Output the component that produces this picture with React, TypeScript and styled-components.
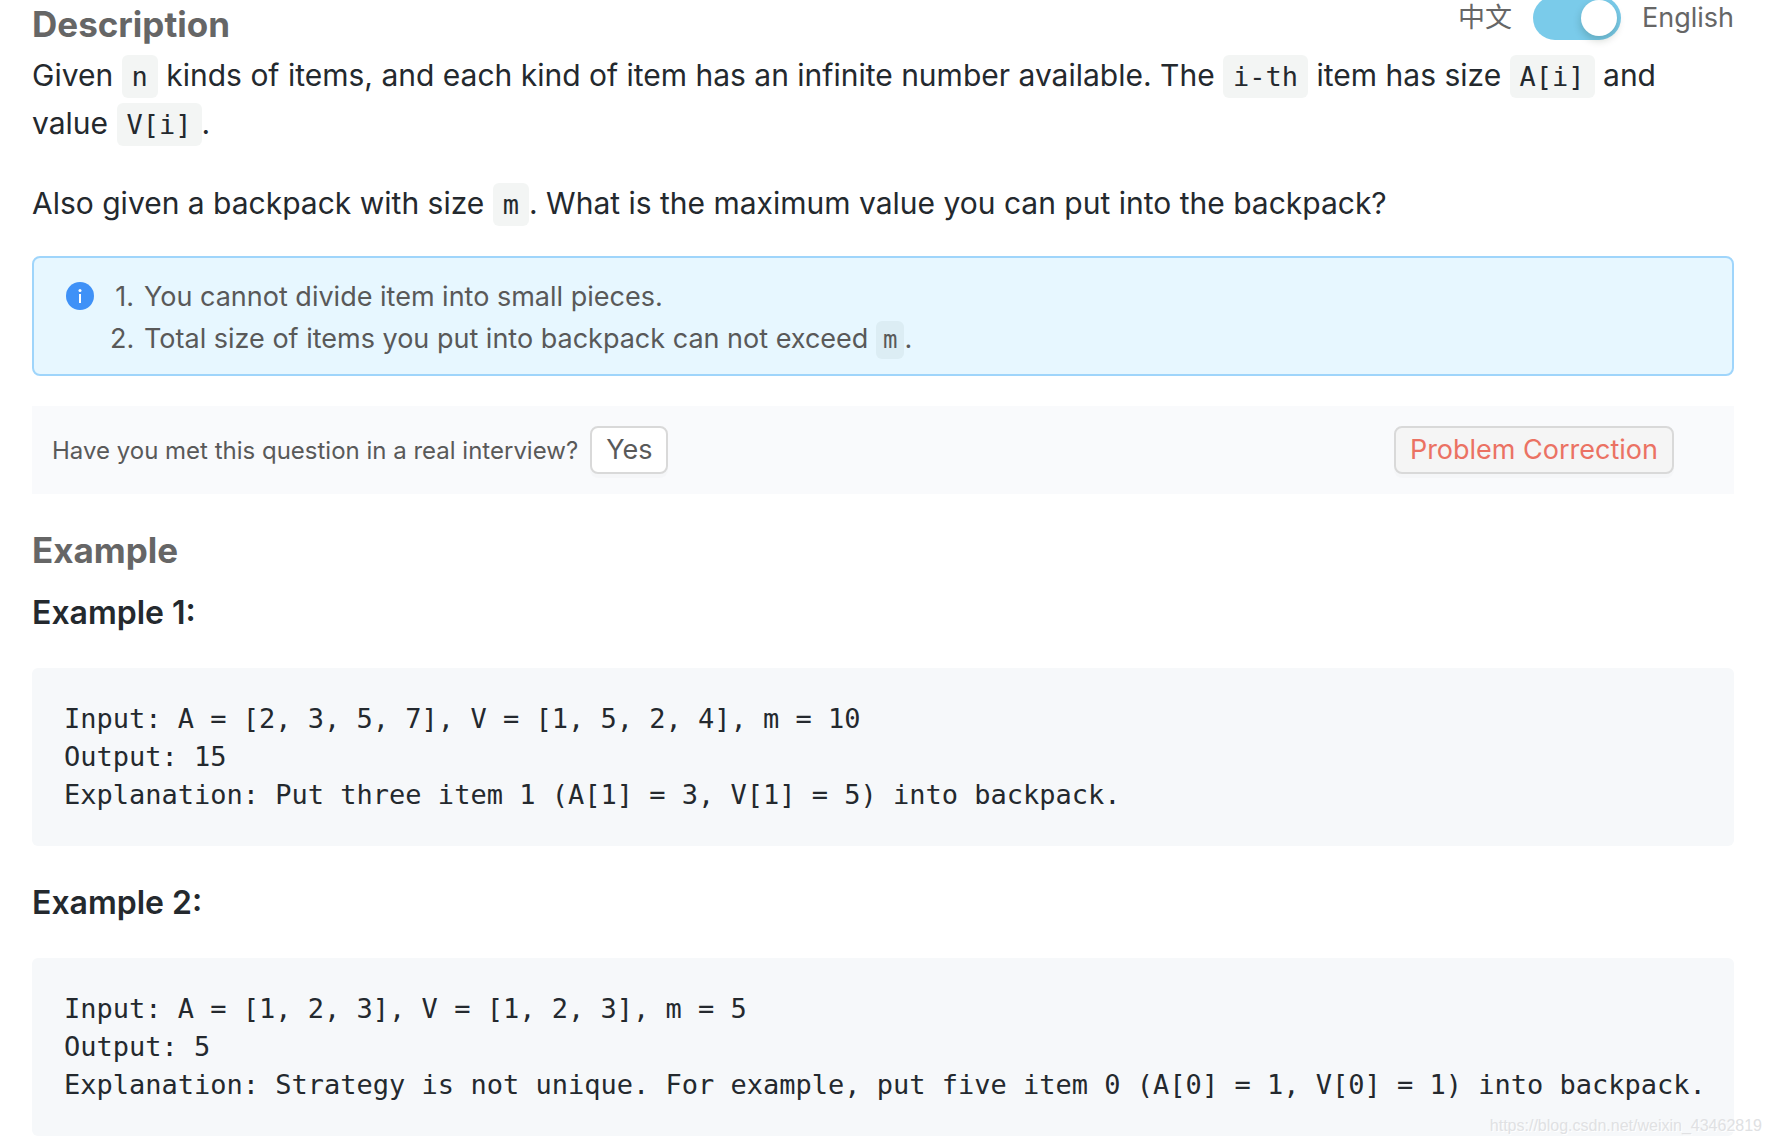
import { useState } from "react";
import styled, { createGlobalStyle } from "styled-components";

const GlobalStyle = createGlobalStyle`
  *, *::before, *::after { box-sizing: border-box; }
  body {
    margin: 0;
    background: #fff;
    color: #24292e;
    font-family: Inter, "Noto Sans CJK SC", sans-serif;
  }
`;

const Page = styled.main`
  position: relative;
  padding: 0 38px 8px 32px;
  overflow: hidden;
`;

const Header = styled.header`
  display: flex;
  justify-content: space-between;
  align-items: flex-start;
  height: 51px;
`;

const SectionTitle = styled.h2`
  margin: 0;
  color: #666;
  font-size: 35px;
  font-weight: 700;
  line-height: 48px;
`;

const LanguageSwitch = styled.div`
  display: flex;
  align-items: center;
  gap: 21px;
  margin-top: -4px;
  color: #666;
  font-size: 27px;
  line-height: 44px;
`;

const Toggle = styled.input`
  appearance: none;
  width: 88px;
  height: 44px;
  margin: 0;
  padding: 4px;
  border-radius: 22px;
  background: ${(p) => (p.checked ? "#7acbea" : "#bfbfbf")};
  cursor: pointer;

  &::before {
    content: "";
    display: block;
    width: 36px;
    height: 36px;
    margin-left: ${(p) => (p.checked ? "44px" : "0")};
    border-radius: 50%;
    background: #fff;
    box-shadow: 0 4px 8px rgba(0, 35, 11, 0.2);
  }
`;

const Statement = styled.div`
  display: flex;
  flex-direction: column;
  gap: 32px;
  margin-bottom: 29px;
`;

const Paragraph = styled.p`
  margin: 0;
  font-size: 30px;
  line-height: 48px;
`;

const Code = styled.code<{ $small?: boolean }>`
  padding: ${(p) => (p.$small ? "5px 7px" : "6px 10px")};
  border-radius: 6px;
  background: rgba(27, 50, 31, 0.05);
  font-family: "DejaVu Sans Mono", monospace;
  font-size: ${(p) => (p.$small ? "24px" : "27px")};
  line-height: 32px;
`;

const Notice = styled.aside`
  display: flex;
  gap: 16px;
  padding: 18px 32px 14px;
  border: 2px solid #9fd5fb;
  border-radius: 8px;
  background: #e7f7ff;
  color: #595959;
`;

const InfoIcon = styled.svg`
  flex: none;
  width: 28px;
  height: 28px;
  margin-top: 6px;
`;

const NoticeList = styled.ol`
  margin: 0;
  padding: 0;
  list-style: none;
  font-size: 27px;
  line-height: 42px;
`;

const NoticeItem = styled.li`
  display: flex;
`;

const Marker = styled.span`
  flex: none;
  width: 34px;
  padding-right: 10px;
  text-align: right;
`;

const InterviewBar = styled.section`
  display: flex;
  align-items: center;
  gap: 12px;
  margin: 30px 0 32px;
  padding: 20px 60px 20px 20px;
  background: #f9fafc;
  color: #595959;
  font-size: 24px;
`;

const Button = styled.button<{ $warning?: boolean }>`
  height: 48px;
  padding: 0 14px;
  border: 2px solid #d9d9d9;
  border-radius: 8px;
  background: ${(p) => (p.$warning ? "#f5f5f5" : "#fff")};
  box-shadow: 0 4px 0 rgba(0, 0, 0, 0.016);
  color: ${(p) => (p.$warning ? "#eb7263" : "#595959")};
  font-family: inherit;
  font-size: 27px;
  line-height: 40px;
  cursor: pointer;
`;

const Spacer = styled.span`
  flex: 1;
`;

const Examples = styled.div`
  display: flex;
  flex-direction: column;
  gap: 33px;
  margin-top: 15px;
`;

const ExampleTitle = styled.h3`
  margin: 0 0 31px;
  font-size: 32px;
  font-weight: 600;
  line-height: 48px;
`;

const CodeBlock = styled.pre`
  margin: 0;
  padding: 32px 16px 32px 32px;
  overflow-x: auto;
  border-radius: 6px;
  background: #f6f8fa;
  font-family: "DejaVu Sans Mono", monospace;
  font-size: 27px;
  line-height: 38px;
`;

const Watermark = styled.span`
  position: absolute;
  right: 10px;
  bottom: 8px;
  color: #e0e1e3;
  font-family: "Liberation Sans", Arial, sans-serif;
  font-size: 16px;
  line-height: 20px;
  text-shadow: 1px 1px 0 #fff;
`;

const examples = [
  {
    title: "Example 1:",
    code: `Input: A = [2, 3, 5, 7], V = [1, 5, 2, 4], m = 10
Output: 15
Explanation: Put three item 1 (A[1] = 3, V[1] = 5) into backpack.`,
  },
  {
    title: "Example 2:",
    code: `Input: A = [1, 2, 3], V = [1, 2, 3], m = 5
Output: 5
Explanation: Strategy is not unique. For example, put five item 0 (A[0] = 1, V[0] = 1) into backpack.`,
  },
];

export default function App() {
  const [english, setEnglish] = useState(true);

  return (
    <>
      <GlobalStyle />
      <Page>
        <Header>
          <SectionTitle>Description</SectionTitle>
          <LanguageSwitch>
            <span lang="zh">中文</span>
            <Toggle
              id="language"
              type="checkbox"
              checked={english}
              onChange={(e) => setEnglish(e.target.checked)}
            />
            <label htmlFor="language">English</label>
          </LanguageSwitch>
        </Header>

        <Statement>
          <Paragraph>
            Given <Code>n</Code> kinds of items, and each kind of item has an infinite number
            available. The <Code>i-th</Code> item has size <Code>A[i]</Code> and value{" "}
            <Code>V[i]</Code>.
          </Paragraph>
          <Paragraph>
            Also given a backpack with size <Code>m</Code>. What is the maximum value you can
            put into the backpack?
          </Paragraph>
        </Statement>

        <Notice>
          <InfoIcon viewBox="0 0 28 28" aria-hidden="true">
            <circle cx="14" cy="14" r="14" fill="#3f91f7" />
            <circle cx="14" cy="8.5" r="1.5" fill="#fff" />
            <rect x="13" y="12" width="2" height="9" fill="#fff" />
          </InfoIcon>
          <NoticeList>
            <NoticeItem>
              <Marker>1.</Marker>
              <span>You cannot divide item into small pieces.</span>
            </NoticeItem>
            <NoticeItem>
              <Marker>2.</Marker>
              <span>
                Total size of items you put into backpack can not exceed <Code $small>m</Code>.
              </span>
            </NoticeItem>
          </NoticeList>
        </Notice>

        <InterviewBar>
          <span>Have you met this question in a real interview?</span>
          <Button type="button">Yes</Button>
          <Spacer />
          <Button type="button" $warning>
            Problem Correction
          </Button>
        </InterviewBar>

        <SectionTitle>Example</SectionTitle>
        <Examples>
          {examples.map((example) => (
            <section key={example.title}>
              <ExampleTitle>{example.title}</ExampleTitle>
              <CodeBlock>{example.code}</CodeBlock>
            </section>
          ))}
        </Examples>

        <Watermark>https://blog.csdn.net/weixin_43462819</Watermark>
      </Page>
    </>
  );
}
